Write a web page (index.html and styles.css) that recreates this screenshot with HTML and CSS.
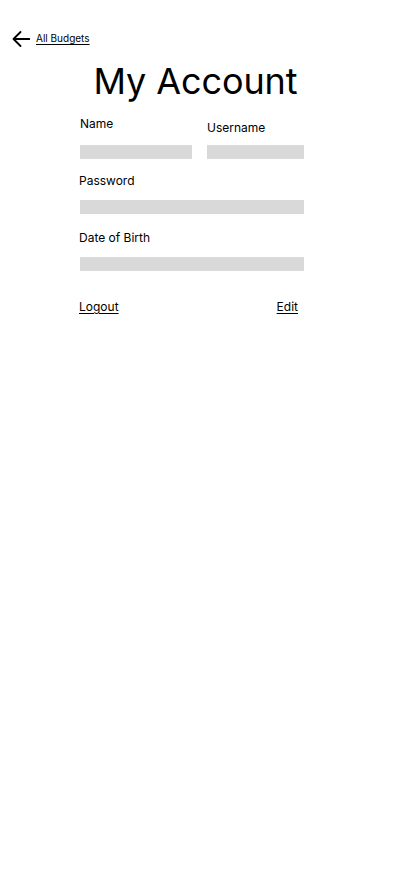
FILE: index.html
```html
<!DOCTYPE html>
<html lang="en">
<head>
<meta charset="utf-8">
<title>My Account</title>
<link rel="stylesheet" href="styles.css">
</head>
<body>
<div class="page">
  <nav class="topbar">
    <svg class="back-icon" width="18" height="16" viewBox="0 0 18 16" aria-hidden="true">
      <path d="M1.5 8 H17.5 M8.5 1 L1.5 8 L8.5 15" fill="none" stroke="#000" stroke-width="1.8" stroke-linecap="round" stroke-linejoin="round"/>
    </svg>
    <a class="back-link" href="#">All Budgets</a>
  </nav>

  <h1 class="title">My Account</h1>

  <form class="form">
    <div class="pair">
      <label class="label">Name</label>
      <label class="label label-user">Username</label>
      <div class="field"></div>
      <div class="field"></div>
    </div>

    <label class="label label-block">Password</label>
    <div class="field field-wide"></div>

    <label class="label label-block">Date of Birth</label>
    <div class="field field-wide"></div>

    <div class="actions">
      <a class="action" href="#">Logout</a>
      <a class="action" href="#">Edit</a>
    </div>
  </form>
</div>
</body>
</html>
```

FILE: styles.css
```css
* {
  box-sizing: border-box;
}

html, body {
  margin: 0;
  padding: 0;
  background: #ffffff;
}

body {
  font-family: Inter, "Noto Sans", "Liberation Sans", sans-serif;
  color: #000000;
}

.page {
  width: 402px;
  min-height: 874px;
}

.topbar {
  display: flex;
  align-items: center;
  gap: 6px;
  padding: 31px 0 0 12px;
  height: 47px;
}

.back-icon {
  display: block;
  flex: none;
}

.back-link {
  font-size: 10px;
  line-height: 14px;
  color: #000;
  text-decoration: underline;
  text-underline-offset: 2px;
  margin-top: -2px;
}

.title {
  margin: 12px 0 0 0;
  font-size: 36px;
  line-height: 44px;
  font-weight: 400;
  text-align: center;
  padding-right: 11px;
  letter-spacing: -0.1px;
}

.form {
  margin: 13px 0 0 80px;
  width: 224px;
  display: flex;
  flex-direction: column;
}

.pair {
  display: grid;
  grid-template-columns: 112px 97px;
  column-gap: 15px;
  row-gap: 10px;
}

.label {
  display: block;
  font-size: 12px;
  line-height: 15px;
}

.label-user {
  padding-top: 4px;
}

.label-block {
  margin-left: -1px;
  margin-top: 14px;
  margin-bottom: 12px;
}

.label-block + .field + .label-block {
  margin-top: 16px;
}

.field {
  height: 14px;
  background: #d9d9d9;
}

.field-wide {
  width: 224px;
}

.actions {
  display: flex;
  justify-content: space-between;
  margin: 28px 6px 0 -1px;
}

.action {
  font-size: 12px;
  line-height: 15px;
  color: #000;
  text-decoration: underline;
  text-underline-offset: 2px;
}
```
